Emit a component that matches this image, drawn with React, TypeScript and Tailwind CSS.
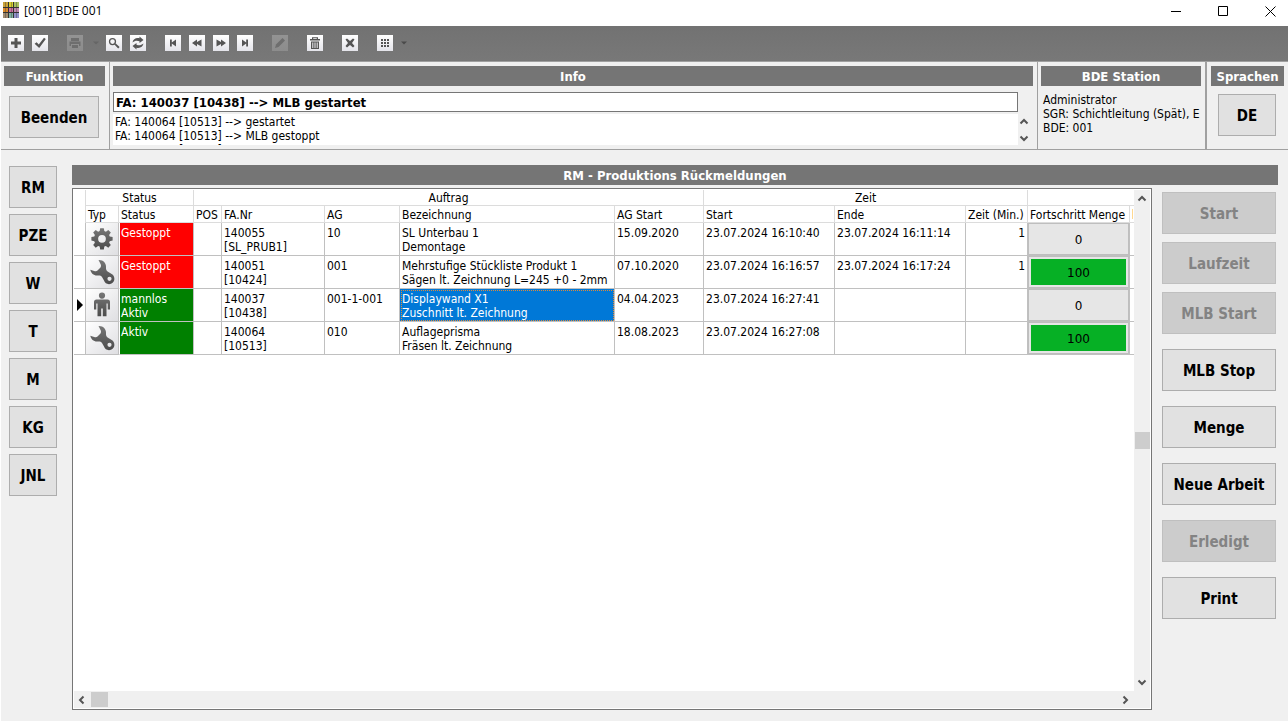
import React from "react";

const ui = "font-['DejaVu_Sans_Condensed','DejaVu_Sans',sans-serif]";

const glyphs: Record<string, React.ReactNode> = {
  add: <path d="M6.500 3h3v3.500H13v3H9.500V13h-3V9.500H3v-3h3.500z" />,
  check: <path d="M2.6 8.800l2-1.600 2.200 2.300L12 2.800l1.800 1.200L7.200 13z" />,
  print: <path d="M4 3h8v3H4zM2.500 6.500h11v4.500H12V9H4v2H2.500zM5 10h6v3H5z" />,
  search: (
    <path
      fillRule="evenodd"
      d="M6.500 3a3.600 3.600 0 1 1 0 7.200a3.600 3.600 0 0 1 0-7.200zM6.500 4.300a2.300 2.300 0 1 0 0 4.600a2.300 2.300 0 0 0 0-4.600zM8.600 9.800L9.800 8.600L13.600 12L12.200 13.400z"
    />
  ),
  refresh: (
    <path d="M2.500 7.500C3 4.200 6 2.500 9.500 3.300V1.500l4 3.500l-4 3V6.300C7 5.300 5 5.500 2.500 7.500zM13.500 8.500C13 11.800 10 13.500 6.500 12.700V14.500l-4-3.500l4-3v1.700C9 10.700 11 10.500 13.500 8.500z" />
  ),
  first: <path d="M5 4.500h1.800v3L11 4.500v7L6.800 8.500v3H5z" />,
  rewind: <path d="M8 4.500v2.500l4.500-2.500v7L8 9v2.500L3 8z" />,
  forward: <path d="M8 4.500v2.500L3.500 4.500v7L8 9v2.500l5-3.500z" />,
  last: <path d="M11 4.500H9.200v3L5 4.500v7l4.200-3v3H11z" />,
  edit: <path d="M3 13l1-3.500L10.500 3L13 5.500L6.500 12z" />,
  trash: (
    <path
      fillRule="evenodd"
      d="M5 4V2.200h6V4h2v1.500H3V4zM6.200 4h3.600V3.200H6.200zM4 6.500h8V14H4zM5.300 7.500v5.500h1V7.500zM7.500 7.500v5.500h1V7.500zM9.700 7.500v5.500h1V7.500z"
    />
  ),
  close: <path d="M3.500 4.500L5 3.500L8 6l3-2.500l1.500 1L10 8l2.500 3l-1.500 1.500L8 10l-3 2.500L3.500 11L6 8z" />,
  grid: (
    <path d="M4 4h2v2H4zM7 4h2v2H7zM10 4h2v2h-2zM4 7h2v2H4zM7 7h2v2H7zM10 7h2v2h-2zM4 10h2v2H4zM7 10h2v2H7zM10 10h2v2h-2z" />
  ),
};

function Tool({ name, label, disabled }: { name: string; label: string; disabled?: boolean }) {
  return (
    <button
      type="button"
      aria-label={label}
      disabled={disabled}
      className="size-4 bg-linear-to-b from-white to-[#e4e4ea] text-[#555] disabled:from-[#939393] disabled:to-[#8c8c8c] disabled:text-[#6e6e6e]"
    >
      <svg viewBox="0 0 16 16" className="block size-4" fill="currentColor">
        {glyphs[name]}
      </svg>
    </button>
  );
}

function Caret({ dim }: { dim?: boolean }) {
  return (
    <svg viewBox="0 0 6 4" className={dim ? "h-1 w-1.5 text-[#666]" : "h-1 w-1.5 text-[#4a4a4a]"} fill="currentColor">
      <path d="M0 0.500h6L3 3.500z" />
    </svg>
  );
}

function Arrow({ dir }: { dir: "up" | "down" | "left" | "right" }) {
  const d = {
    up: "M1.500 6.500L5 3l3.500 3.500",
    down: "M1.500 3.500L5 7l3.500-3.500",
    left: "M6.500 1.500L3 5l3.500 3.500",
    right: "M3.500 1.500L7 5L3.500 8.500",
  }[dir];
  return (
    <svg viewBox="0 0 10 10" className="size-2.5" fill="none" stroke="#555" strokeWidth="2">
      <path d={d} />
    </svg>
  );
}

function Heading({ children }: { children: React.ReactNode }) {
  return (
    <h2 className="h-5 overflow-hidden bg-[#757575] pt-px text-center text-[13px] leading-5 font-bold whitespace-nowrap text-white">
      {children}
    </h2>
  );
}

function PushButton({ label, className, disabled }: { label: string; className?: string; disabled?: boolean }) {
  return (
    <button
      type="button"
      disabled={disabled}
      className={
        "h-[42px] shrink-0 border border-[#adadad] bg-[#e1e1e1] pt-[3px] text-[15px] font-bold whitespace-nowrap text-black disabled:border-[#bfbfbf] disabled:bg-[#ccc] disabled:text-[#838383] " +
        (className ?? "")
      }
    >
      {label}
    </button>
  );
}

function TypeIcon({ kind }: { kind: "gear" | "wrench" | "person" }) {
  return (
    <svg viewBox="0 0 32 32" className="block size-8" role="img" aria-label={kind}>
      <defs>
        <linearGradient id={"ink-" + kind} x1="0" y1="0" x2="0" y2="1">
          <stop offset="0" stopColor="#777" />
          <stop offset="1" stopColor="#4c4c4c" />
        </linearGradient>
      </defs>
      {kind === "gear" && (
        <path
          fill="url(#ink-gear)"
          transform="translate(2.050 0.700) scale(.9)"
          fillRule="evenodd"
          d="M13.500 5h4l.6 3.200l1.700.7l2.700-1.900l2.800 2.800l-1.900 2.700l.7 1.700l3.200.6v4l-3.200.6l-.7 1.700l1.900 2.700l-2.800 2.800l-2.700-1.900l-1.700.7l-.6 3.200h-4l-.6-3.200l-1.700-.7l-2.700 1.900l-2.800-2.800l1.900-2.700l-.7-1.700l-3.200-.6v-4l3.200-.6l.7-1.700l-1.900-2.700l2.800-2.800l2.700 1.900l1.700-.7zM15.500 12.500a4.300 4.300 0 1 0 0 8.600a4.300 4.300 0 0 0 0-8.600z"
        />
      )}
      {kind === "wrench" && (
        <path
          fill="url(#ink-wrench)"
          fillRule="evenodd"
          d="M12.500 4C17.500 3.800 20.500 7.500 20 11.500C19.800 13.500 20.500 14.800 22 15.800L26.500 18.500C29.300 21 29 26 25.500 27.600C22 29 19 27.500 18 24.500L16 21C15 19.500 13.500 19.300 12 19.500C8 20 5 17.500 4.300 13.800L9 15.200Q10.500 15.500 11.500 14.500L14.500 11.500Q15.500 10 14.800 8.500ZM23.500 20.700a2.100 2.100 0 1 0 0 4.200a2.100 2.100 0 0 0 0-4.200z"
        />
      )}
      {kind === "person" && (
        <path
          fill="url(#ink-person)"
          d="M16 3.500a3.100 3.100 0 1 1 0 6.200a3.100 3.100 0 0 1 0-6.200zM10.500 10.500h11q2.500 0 2.500 2.500v7.500h-2.300V14.500h-1.200V27.300h-3.700V19.500h-1.600v7.800h-3.700V14.500h-1.200V20.500H8V13q0-2.500 2.500-2.500z"
        />
      )}
    </svg>
  );
}

type Row = {
  kind: "gear" | "wrench" | "person";
  status: string[];
  running: boolean;
  fa: string[];
  ag: string;
  text: string[];
  agStart: string;
  start: string;
  end: string;
  minutes: string;
  progress: number;
  current?: boolean;
};

const rows: Row[] = [
  { kind: "gear", status: ["Gestoppt"], running: false, fa: ["140055", "[SL_PRUB1]"], ag: "10", text: ["SL Unterbau 1", "Demontage"], agStart: "15.09.2020", start: "23.07.2024 16:10:40", end: "23.07.2024 16:11:14", minutes: "1", progress: 0 },
  { kind: "wrench", status: ["Gestoppt"], running: false, fa: ["140051", "[10424]"], ag: "001", text: ["Mehrstufige Stückliste Produkt 1", "Sägen lt. Zeichnung L=245 +0 - 2mm"], agStart: "07.10.2020", start: "23.07.2024 16:16:57", end: "23.07.2024 16:17:24", minutes: "1", progress: 100 },
  { kind: "person", status: ["mannlos", "Aktiv"], running: true, fa: ["140037", "[10438]"], ag: "001-1-001", text: ["Displaywand X1", "Zuschnitt lt. Zeichnung"], agStart: "04.04.2023", start: "23.07.2024 16:27:41", end: "", minutes: "", progress: 0, current: true },
  { kind: "wrench", status: ["Aktiv"], running: true, fa: ["140064", "[10513]"], ag: "010", text: ["Auflageprisma", "Fräsen lt. Zeichnung"], agStart: "18.08.2023", start: "23.07.2024 16:27:08", end: "", minutes: "", progress: 100 },
];

const cell = "h-[33px] border-r border-b border-[#c0c0c0] px-0.5 pt-[3px] align-top";
const band = "h-4 border-r border-b border-[#dcdcdc] p-0 pt-px text-center font-normal";
const head = "h-[17px] overflow-hidden border-r border-b border-[#dcdcdc] px-0.5 pt-px text-left font-normal";

function Lines({ items }: { items: string[] }) {
  return (
    <>
      {items.map((t) => (
        <div key={t}>{t}</div>
      ))}
    </>
  );
}

function Grid() {
  return (
    <table className="w-full table-fixed border-separate border-spacing-0 text-xs leading-[14px] whitespace-nowrap">
      <colgroup>
        <col className="w-3" />
        <col className="w-[33px]" />
        <col className="w-[75px]" />
        <col className="w-7" />
        <col className="w-[103px]" />
        <col className="w-[75px]" />
        <col className="w-[215px]" />
        <col className="w-[89px]" />
        <col className="w-[131px]" />
        <col className="w-[131px]" />
        <col className="w-[62px]" />
        <col className="w-[102px]" />
        <col />
      </colgroup>
      <thead>
        <tr>
          <td className="border-r border-[#dcdcdc] p-0" />
          <th colSpan={2} className={band}>Status</th>
          <th colSpan={5} className={band}>Auftrag</th>
          <th colSpan={3} className={band}>Zeit</th>
          <td colSpan={2} className="border-b border-[#dcdcdc] p-0" />
        </tr>
        <tr>
          <td className="border-r border-[#dcdcdc] p-0" />
          <th className={head}>Typ</th>
          <th className={head}>Status</th>
          <th className={head}>POS</th>
          <th className={head}>FA.Nr</th>
          <th className={head}>AG</th>
          <th className={head}>Bezeichnung</th>
          <th className={head}>AG Start</th>
          <th className={head}>Start</th>
          <th className={head}>Ende</th>
          <th className={head}>Zeit (Min.)</th>
          <th className={head}>Fortschritt Menge</th>
          <td className="border-b border-[#dcdcdc] p-0">
            <div className="ml-0.5 h-2.5 w-px bg-[#ffd890]" />
          </td>
        </tr>
      </thead>
      <tbody>
        {rows.map((r) => (
          <tr key={r.fa[0]}>
            <td className="border-r border-b border-[#c0c0c0] p-0 align-middle">
              {r.current && (
                <svg viewBox="0 0 6 12" className="ml-[3px] h-3 w-1.5">
                  <path d="M0 0l6 6l-6 6z" />
                </svg>
              )}
            </td>
            <td className="h-[33px] border-r border-b border-[#c0c0c0] bg-linear-to-br from-white to-[#dfdfe2] p-0">
              <TypeIcon kind={r.kind} />
            </td>
            <td className={cell + (r.running ? " border-l border-l-white bg-[#008000] pl-px text-white" : " border-l border-l-white bg-[#ff0000] pl-px text-white")}>
              <Lines items={r.status} />
            </td>
            <td className={cell} />
            <td className={cell}><Lines items={r.fa} /></td>
            <td className={cell}>{r.ag}</td>
            <td className={cell + (r.current ? " bg-[#0078d7] text-white outline-1 -outline-offset-2 outline-dotted outline-[#e08a3a]" : "")}>
              <Lines items={r.text} />
            </td>
            <td className={cell}>{r.agStart}</td>
            <td className={cell}>{r.start}</td>
            <td className={cell}>{r.end}</td>
            <td className={cell + " text-right"}>{r.minutes}</td>
            <td className="h-[33px] border-r border-b border-[#c0c0c0] p-0">
              <div className="flex h-8 border border-[#bebebe] bg-[#e6e6e6] p-0.5 font-['DejaVu_Sans',sans-serif]">
                <div className={"flex flex-1 items-center justify-center pt-px " + (r.progress === 100 ? "bg-[#06b025]" : "")}>
                  {r.progress}
                </div>
              </div>
            </td>
            <td className="border-b border-[#c0c0c0] p-0" />
          </tr>
        ))}
      </tbody>
    </table>
  );
}

const tiles = [
  ["#c9a23a", "#d8d030", "#a9c060"],
  ["#d98a2c", "#d070a0", "#c08ab0"],
  ["#a08a70", "#7fb0a0", "#9090c8"],
];

export default function App() {
  return (
    <div className={"flex min-h-screen flex-col border-l border-white bg-[#f0f0f0] text-xs text-black " + ui}>
      <header className="flex h-[26px] items-start bg-white">
        <svg viewBox="0 0 16 16" className="mt-0.5 ml-0.5 size-4">
          {tiles.map((line, y) =>
            line.map((c, x) => <rect key={c} x={x * 5.5} y={y * 5.5} width={5.5} height={5.5} fill={c} />)
          )}
          <path d="M0 5.500h16M0 10.500h16M5.500 0v16M10.500 0v16" stroke="#333" strokeWidth="1" />
          <path d="M2.500 0v16M8.500 0v16M13.500 0v16" stroke="#333" strokeWidth=".6" opacity=".6" />
        </svg>
        <h1 className="ml-[5px] grow font-['Open_Sans','Noto_Sans',sans-serif] text-xs leading-[22px]">[001] BDE 001</h1>
        <div className="mt-1.5 mr-3 flex gap-9">
          <button type="button" aria-label="Minimieren">
            <svg viewBox="0 0 11 11" className="size-[11px]" stroke="#000"><path d="M0 5.500h10" /></svg>
          </button>
          <button type="button" aria-label="Maximieren">
            <svg viewBox="0 0 11 11" className="size-[11px]" stroke="#000" fill="none"><path d="M.5.500h9v9h-9z" /></svg>
          </button>
          <button type="button" aria-label="Schließen">
            <svg viewBox="0 0 11 11" className="size-[11px]" stroke="#000"><path d="M.5.500l10 10M10.500.500l-10 10" /></svg>
          </button>
        </div>
      </header>

      <div className="flex h-9 items-start border-b border-[#a0a0a0] bg-linear-to-b from-[#727272] to-[#787878] pt-[9px] pl-[7px]">
        <div className="flex gap-2">
          <Tool name="add" label="Neu" />
          <Tool name="check" label="Übernehmen" />
        </div>
        <div className="ml-[19px] flex items-center gap-2.5">
          <Tool name="print" label="Drucken" disabled />
          <Caret dim />
        </div>
        <div className="ml-[7px] flex gap-2">
          <Tool name="search" label="Suchen" />
          <Tool name="refresh" label="Aktualisieren" />
        </div>
        <div className="ml-[19px] flex gap-2">
          <Tool name="first" label="Erster" />
          <Tool name="rewind" label="Zurück" />
          <Tool name="forward" label="Weiter" />
          <Tool name="last" label="Letzter" />
        </div>
        <div className="ml-[19px] flex gap-[19px]">
          <Tool name="edit" label="Bearbeiten" disabled />
          <Tool name="trash" label="Löschen" />
          <Tool name="close" label="Abbrechen" />
          <div className="flex items-center gap-2">
            <Tool name="grid" label="Ansicht" />
            <Caret />
          </div>
        </div>
      </div>

      <div className="flex h-[88px] border-b border-[#a0a0a0]">
        <section className="w-[109px] shrink-0 border-r border-[#a0a0a0] pt-1 pr-1 pl-[3px]">
          <Heading>Funktion</Heading>
          <PushButton label="Beenden" className="mt-2.5 ml-[5px] w-[90px]" />
        </section>
        <section className="min-w-0 flex-1 border-r border-[#a0a0a0] pt-1 pr-1 pl-[3px]">
          <Heading>Info</Heading>
          <div className="mt-1.5 flex">
            <div className="min-w-0 flex-1">
              <input
                aria-label="Info"
                readOnly
                value="FA: 140037 [10438] --> MLB gestartet"
                className="block h-5 w-full border border-[#767676] bg-white px-0.5 text-[13px] font-bold"
              />
              <div className="mt-0.5 h-[31px] overflow-hidden bg-white pt-px pl-0.5 leading-[14px]">
                <div>FA: 140064 [10513] --&gt; gestartet</div>
                <div>FA: 140064 [10513] --&gt; MLB gestoppt</div>
                <div>FA: 140064 [10513] --&gt; MLB gestartet</div>
              </div>
            </div>
            <div className="flex w-[15px] flex-col items-start justify-end gap-1.5 pb-0.5 pl-px">
              <Arrow dir="up" />
              <Arrow dir="down" />
            </div>
          </div>
        </section>
        <section className="w-[169px] shrink-0 border-r-2 border-[#a0a0a0] pt-1 pr-1 pl-[3px]">
          <Heading>BDE Station</Heading>
          <div className="mt-[7px] overflow-hidden pl-0.5 leading-[14px] whitespace-nowrap">
            <div>Administrator</div>
            <div>SGR: Schichtleitung (Spät), E</div>
            <div>BDE: 001</div>
          </div>
        </section>
        <section className="w-[81px] shrink-0 px-1 pt-1">
          <Heading>Sprachen</Heading>
          <PushButton label="DE" className="mt-2 ml-[7px] w-[58px]" />
        </section>
      </div>

      <div className="flex flex-1 pt-[15px] pb-[11px]">
        <nav className="flex w-[71px] shrink-0 flex-col gap-1.5 pt-px pl-2">
          {["RM", "PZE", "W", "T", "M", "KG", "JNL"].map((l) => (
            <PushButton key={l} label={l} className="w-12" />
          ))}
        </nav>
        <main className="mr-2.5 flex min-w-0 flex-1 flex-col">
          <Heading>RM - Produktions Rückmeldungen</Heading>
          <div className="mt-[3px] flex flex-1">
            <div className="flex min-w-0 flex-1 flex-col border border-[#767676] bg-white p-px">
              <div className="flex flex-1">
                <div className="min-w-0 flex-1 overflow-hidden">
                  <Grid />
                </div>
                <div className="flex w-4 shrink-0 flex-col items-center justify-between bg-[#f0f0f0] pt-1 pb-1">
                  <Arrow dir="up" />
                  <div className="h-[17px] w-[15px] bg-[#cdcdcd]" />
                  <Arrow dir="down" />
                </div>
              </div>
              <div className="flex h-[17px] items-center bg-[#f0f0f0] pr-5 pl-[3px]">
                <Arrow dir="left" />
                <div className="ml-1 h-[15px] w-[17px] bg-[#cdcdcd]" />
                <div className="grow" />
                <Arrow dir="right" />
              </div>
            </div>
            <div className="flex w-[126px] shrink-0 flex-col gap-[15px] pt-1 pr-0.5 pl-2.5">
              <div className="flex flex-col gap-2">
                <PushButton label="Start" disabled />
                <PushButton label="Laufzeit" disabled />
                <PushButton label="MLB Start" disabled />
              </div>
              <PushButton label="MLB Stop" />
              <PushButton label="Menge" />
              <PushButton label="Neue Arbeit" />
              <PushButton label="Erledigt" disabled />
              <PushButton label="Print" />
            </div>
          </div>
        </main>
      </div>
    </div>
  );
}
